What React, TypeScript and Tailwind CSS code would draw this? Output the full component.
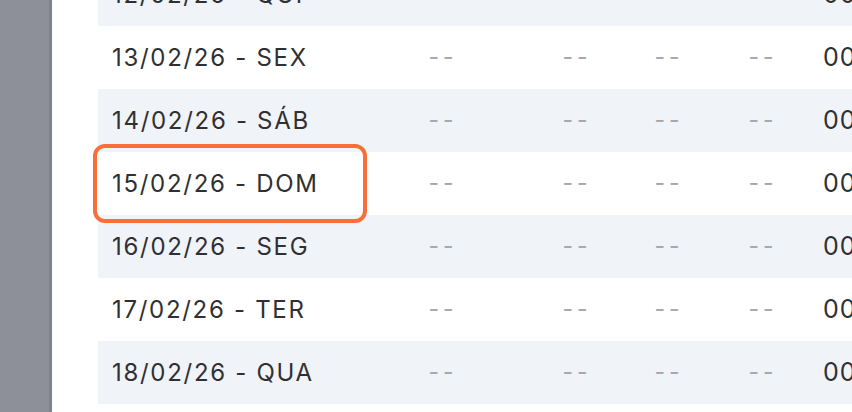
import React from "react";

interface DayRow {
  date: string;
  striped: boolean;
  highlight?: boolean;
}

const rows: DayRow[] = [
  { date: "12/02/26 - QUI", striped: true },
  { date: "13/02/26 - SEX", striped: false },
  { date: "14/02/26 - SÁB", striped: true },
  { date: "15/02/26 - DOM", striped: false, highlight: true },
  { date: "16/02/26 - SEG", striped: true },
  { date: "17/02/26 - TER", striped: false },
  { date: "18/02/26 - QUA", striped: true },
  { date: "19/02/26 - QUI", striped: false },
];

const Dash = ({ className }: { className: string }) => (
  <div className={`flex w-[80px] shrink-0 justify-center ${className}`}>
    <span className="text-[23px] tracking-[4px] text-[#a6a7ab]">--</span>
  </div>
);

export default function App() {
  return (
    <div
      className="flex h-[412px] w-[852px] overflow-hidden bg-white"
      style={{ fontFamily: "Inter, 'Noto Sans', sans-serif" }}
    >
      <div className="h-full w-[52px] shrink-0 border-r-[3px] border-[#7f828b] bg-[#8d9099]" />
      <div className="ml-[46px] flex min-w-0 flex-1 flex-col">
        <div className="-mt-[37px] flex flex-col">
          {rows.map((row) => (
            <div
              key={row.date}
              className={`flex h-[63px] shrink-0 items-center ${
                row.striped ? "bg-[#f0f3f8]" : "bg-white"
              }`}
            >
              <div className="relative flex h-full w-[305px] shrink-0 items-center pl-[14px]">
                {row.highlight && (
                  <div className="absolute -top-[8px] -bottom-[8px] left-[-5px] w-[274px] rounded-[12px] border-[4px] border-[#fb6d3a]" />
                )}
                <span className="whitespace-nowrap text-[24px] tracking-[1.7px] text-[#303033]">
                  {row.date}
                </span>
              </div>
              <Dash className="" />
              <Dash className="ml-[54px]" />
              <Dash className="ml-[12px]" />
              <Dash className="ml-[14px]" />
              <span className="ml-[20px] whitespace-nowrap text-[25px] tracking-[1px] text-[#303033]">
                00:00
              </span>
            </div>
          ))}
        </div>
      </div>
    </div>
  );
}
